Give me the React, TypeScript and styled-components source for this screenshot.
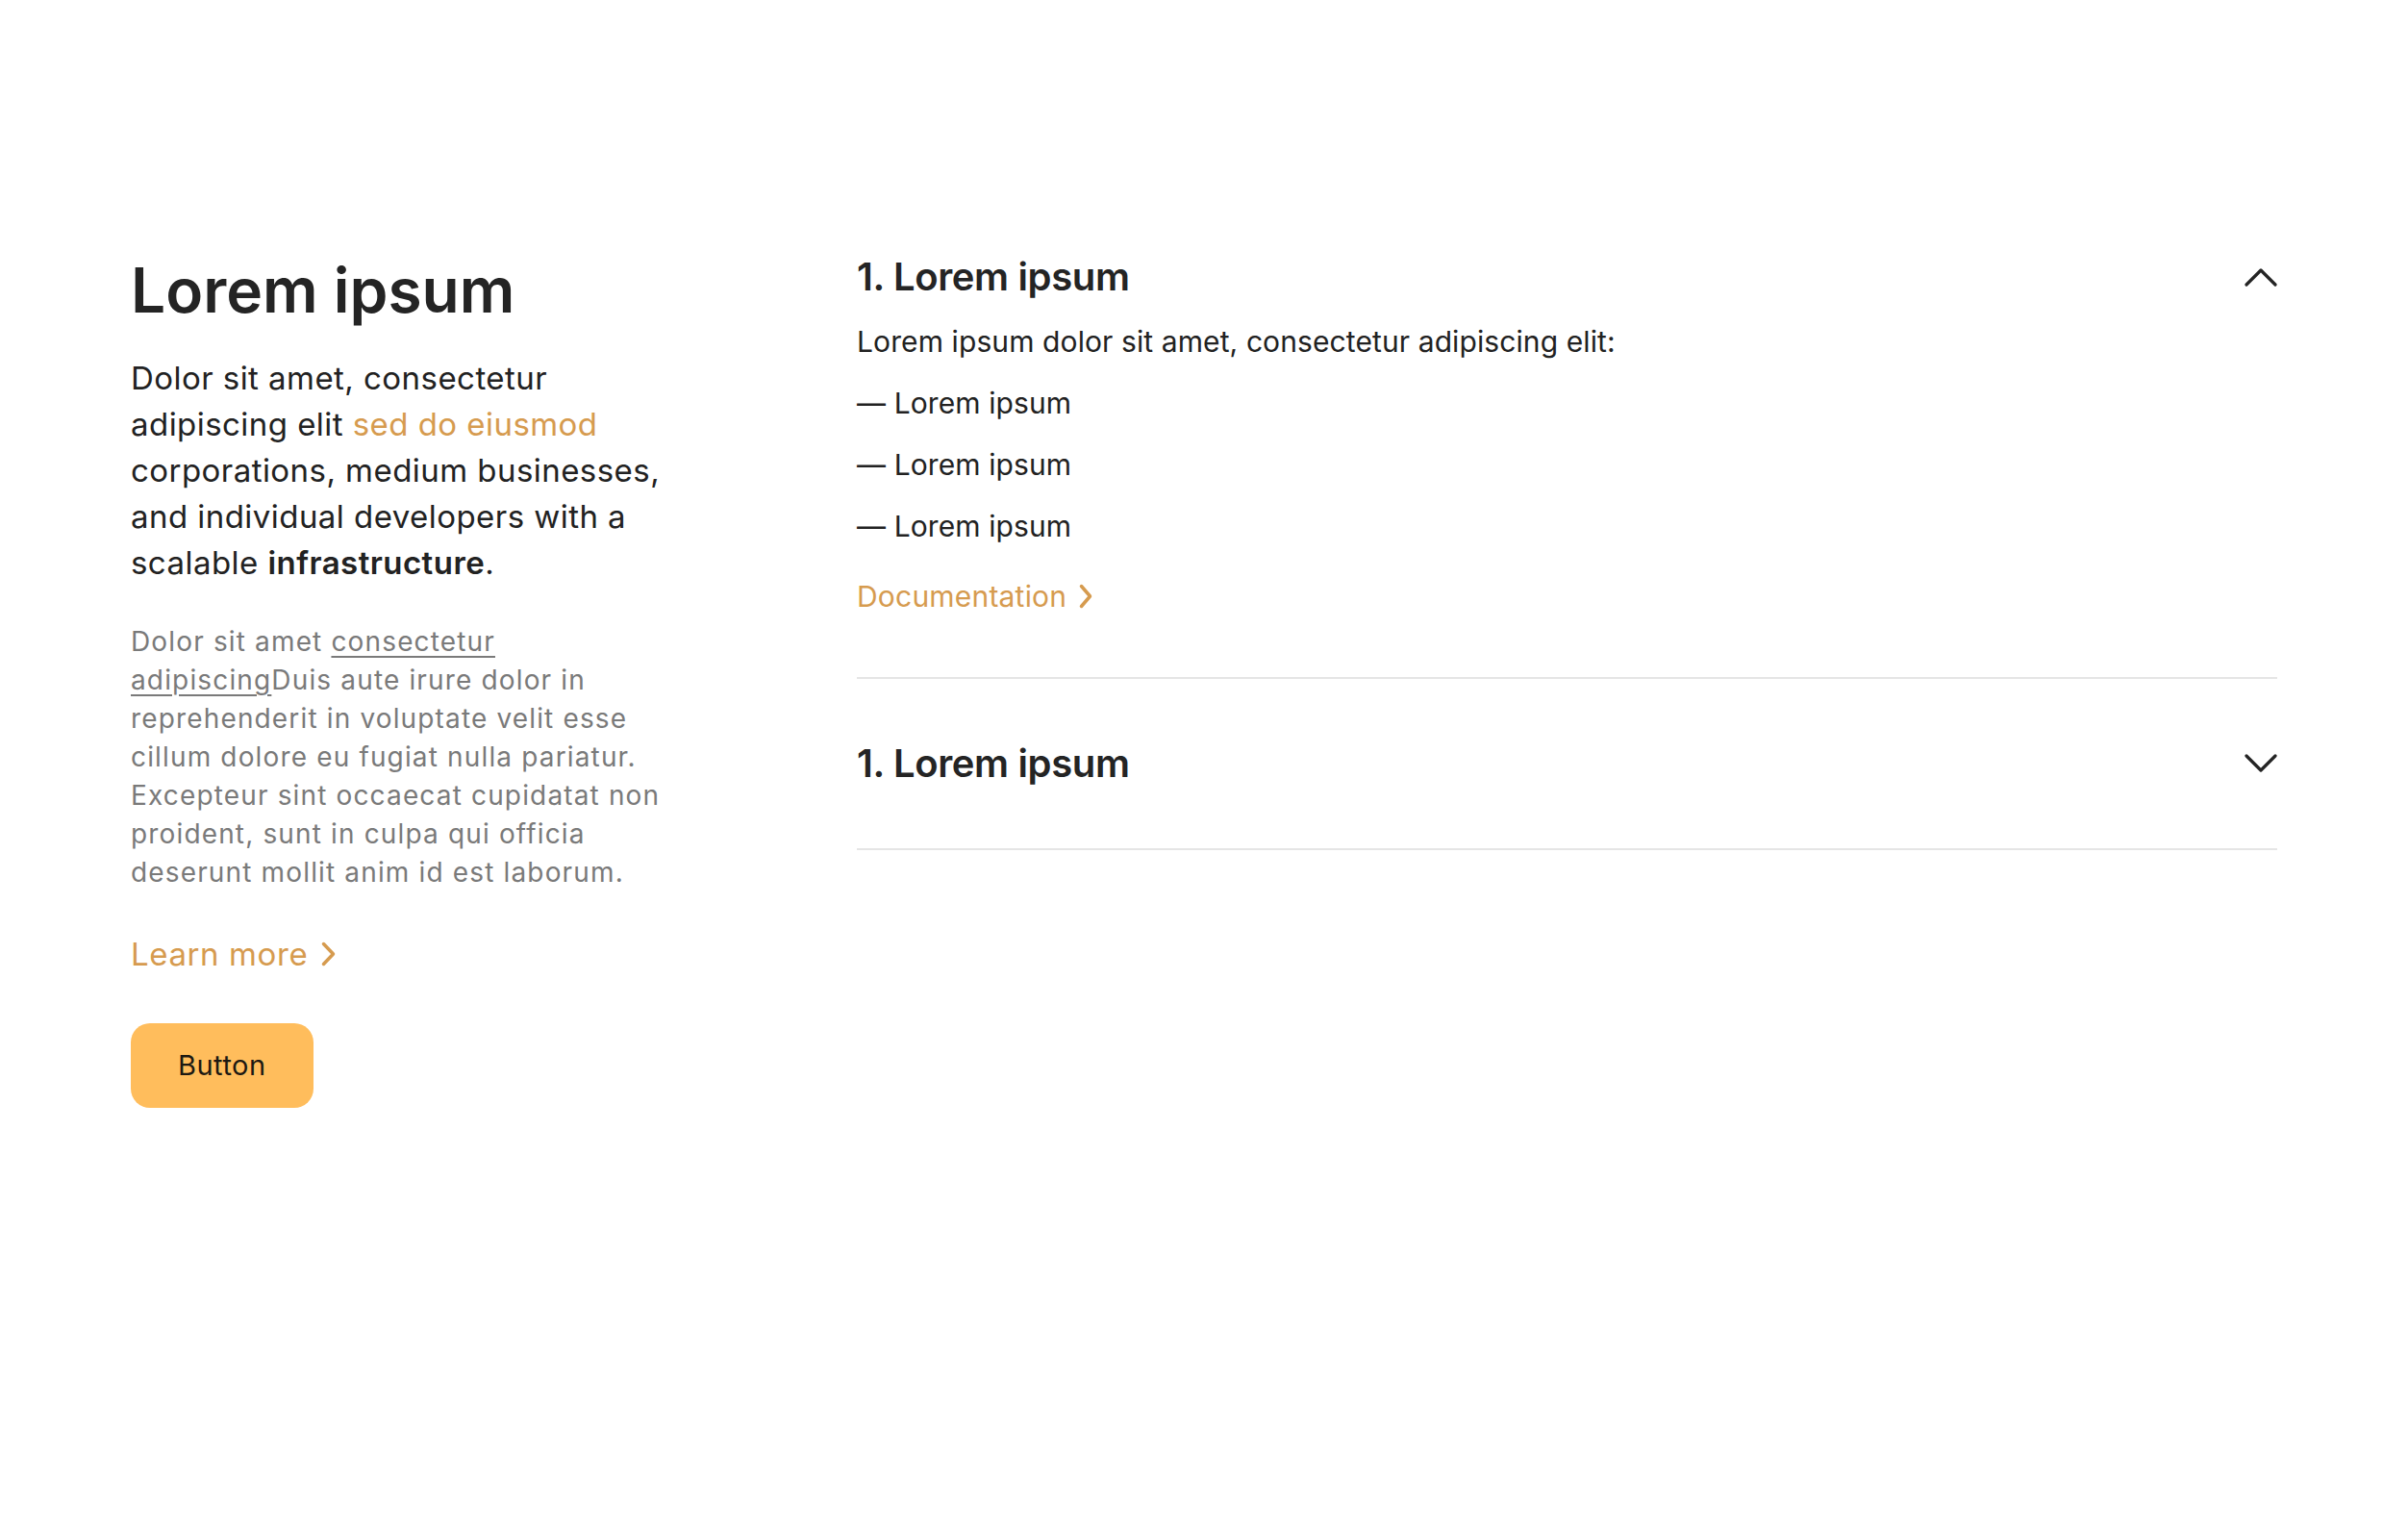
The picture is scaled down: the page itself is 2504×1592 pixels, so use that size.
import { useState } from 'react';
import styled, { createGlobalStyle } from 'styled-components';

const GlobalStyle = createGlobalStyle`
  html, body {
    margin: 0;
    padding: 0;
    background: #fff;
  }
  body {
    font-family: Inter, "Noto Sans", "Liberation Sans", sans-serif;
    color: #222;
  }
  * {
    box-sizing: border-box;
  }
`;

const ORANGE = '#d69b4f';

const Page = styled.div`
  min-height: 1592px;
  padding: 264px 136px 0;
  display: grid;
  grid-template-columns: 572px 1fr;
  column-gap: 183px;
  align-items: start;
`;

const Intro = styled.section`
  display: flex;
  flex-direction: column;
  align-items: flex-start;
`;

const Title = styled.h1`
  margin: 0;
  font-size: 64px;
  line-height: 1.2;
  font-weight: 600;
  color: #242424;
`;

const Lead = styled.p`
  margin: 28px 0 0;
  font-size: 33px;
  line-height: 48px;
  letter-spacing: 0.45px;
  color: #222;
`;

const Accent = styled.span`
  color: ${ORANGE};
`;

const Strong = styled.strong`
  font-weight: 600;
`;

const Note = styled.p`
  margin: 38px 0 0;
  font-size: 28px;
  line-height: 40px;
  letter-spacing: 1.15px;
  color: #7a7a7a;
`;

const NoteLink = styled.a`
  color: inherit;
  text-decoration: underline;
  text-decoration-thickness: 2px;
  text-underline-offset: 5px;
`;

const ArrowLink = styled.a<{ $size: number; $lineHeight: number; $spacing: number }>`
  display: inline-flex;
  align-items: center;
  gap: 14px;
  color: ${ORANGE};
  text-decoration: none;
  font-size: ${(p) => p.$size}px;
  line-height: ${(p) => p.$lineHeight}px;
  letter-spacing: ${(p) => p.$spacing}px;
`;

const LearnMore = styled(ArrowLink)`
  margin-top: 41px;
`;

const Button = styled.button`
  margin-top: 48px;
  height: 88px;
  padding: 0 49px;
  border: none;
  border-radius: 20px;
  background: #ffbd5c;
  color: #1d1912;
  font-family: inherit;
  font-size: 29px;
  letter-spacing: 0.5px;
  cursor: pointer;
`;

const Accordion = styled.section`
  display: flex;
  flex-direction: column;
`;

const Item = styled.div`
  padding: 64px 0;
  border-bottom: 2px solid #e5e5e5;

  &:first-child {
    padding-top: 0;
  }
`;

const Header = styled.button`
  width: 100%;
  display: flex;
  align-items: center;
  justify-content: space-between;
  padding: 0;
  border: none;
  background: none;
  font-family: inherit;
  cursor: pointer;
  text-align: left;
`;

const HeaderTitle = styled.span`
  font-size: 40px;
  line-height: 48px;
  font-weight: 600;
  letter-spacing: -0.35px;
  color: #242424;
`;

const Body = styled.div`
  margin-top: 23px;
  display: flex;
  flex-direction: column;
  gap: 24px;
`;

const BodyLine = styled.p`
  margin: 0;
  font-size: 30px;
  line-height: 40px;
  letter-spacing: 0.1px;
  color: #222;
`;

const DocLink = styled(ArrowLink)`
  margin-top: 9px;
  gap: 13px;
  align-self: flex-start;
`;

const Chevron = ({ up }: { up: boolean }) => (
  <svg width="34" height="20" viewBox="0 0 34 20" fill="none">
    <polyline
      points={up ? '2,18 17,3 32,18' : '2,2 17,17 32,2'}
      stroke="#242424"
      strokeWidth="3.2"
      strokeLinecap="round"
      strokeLinejoin="round"
    />
  </svg>
);

const ArrowRight = ({ width = 15 }: { width?: number }) => (
  <svg width={width} height="26" viewBox={`0 0 ${width} 26`} fill="none">
    <polyline
      points={`2.5,2.5 ${width - 2.5},13 2.5,23.5`}
      stroke={ORANGE}
      strokeWidth="3.5"
      strokeLinecap="round"
      strokeLinejoin="round"
    />
  </svg>
);

const sections = [
  {
    title: '1. Lorem ipsum',
    intro: 'Lorem ipsum dolor sit amet, consectetur adipiscing elit:',
    items: ['Lorem ipsum', 'Lorem ipsum', 'Lorem ipsum'],
  },
  {
    title: '1. Lorem ipsum',
    intro: 'Lorem ipsum dolor sit amet, consectetur adipiscing elit:',
    items: ['Lorem ipsum', 'Lorem ipsum', 'Lorem ipsum'],
  },
];

const App = () => {
  const [open, setOpen] = useState<number | null>(0);

  return (
    <>
      <GlobalStyle/>
      <Page>
        <Intro>
          <Title>Lorem ipsum</Title>
          <Lead>
            Dolor sit amet, consectetur adipiscing elit <Accent>sed do eiusmod</Accent> corporations,
            medium businesses, and individual developers with a scalable <Strong>infrastructure</Strong>.
          </Lead>
          <Note>
            Dolor sit amet <NoteLink href="#">consectetur adipiscing</NoteLink>Duis aute irure dolor in
            reprehenderit in voluptate velit esse cillum dolore eu fugiat nulla pariatur. Excepteur sint
            occaecat cupidatat non proident, sunt in culpa qui officia deserunt mollit anim id est laborum.
          </Note>
          <LearnMore href="#" $size={33} $lineHeight={48} $spacing={0.6}>
            Learn more <ArrowRight/>
          </LearnMore>
          <Button type="button">Button</Button>
        </Intro>

        <Accordion>
          {sections.map((section, i) => (
            <Item key={i}>
              <Header type="button" onClick={() => setOpen(open === i ? null : i)}>
                <HeaderTitle>{section.title}</HeaderTitle>
                <Chevron up={open === i}/>
              </Header>
              {open === i && (
                <Body>
                  <BodyLine>{section.intro}</BodyLine>
                  {section.items.map((item, j) => (
                    <BodyLine key={j}>— {item}</BodyLine>
                  ))}
                  <DocLink href="#" $size={30} $lineHeight={40} $spacing={0.2}>
                    Documentation <ArrowRight width={14}/>
                  </DocLink>
                </Body>
              )}
            </Item>
          ))}
        </Accordion>
      </Page>
    </>
  );
};

export default App;
